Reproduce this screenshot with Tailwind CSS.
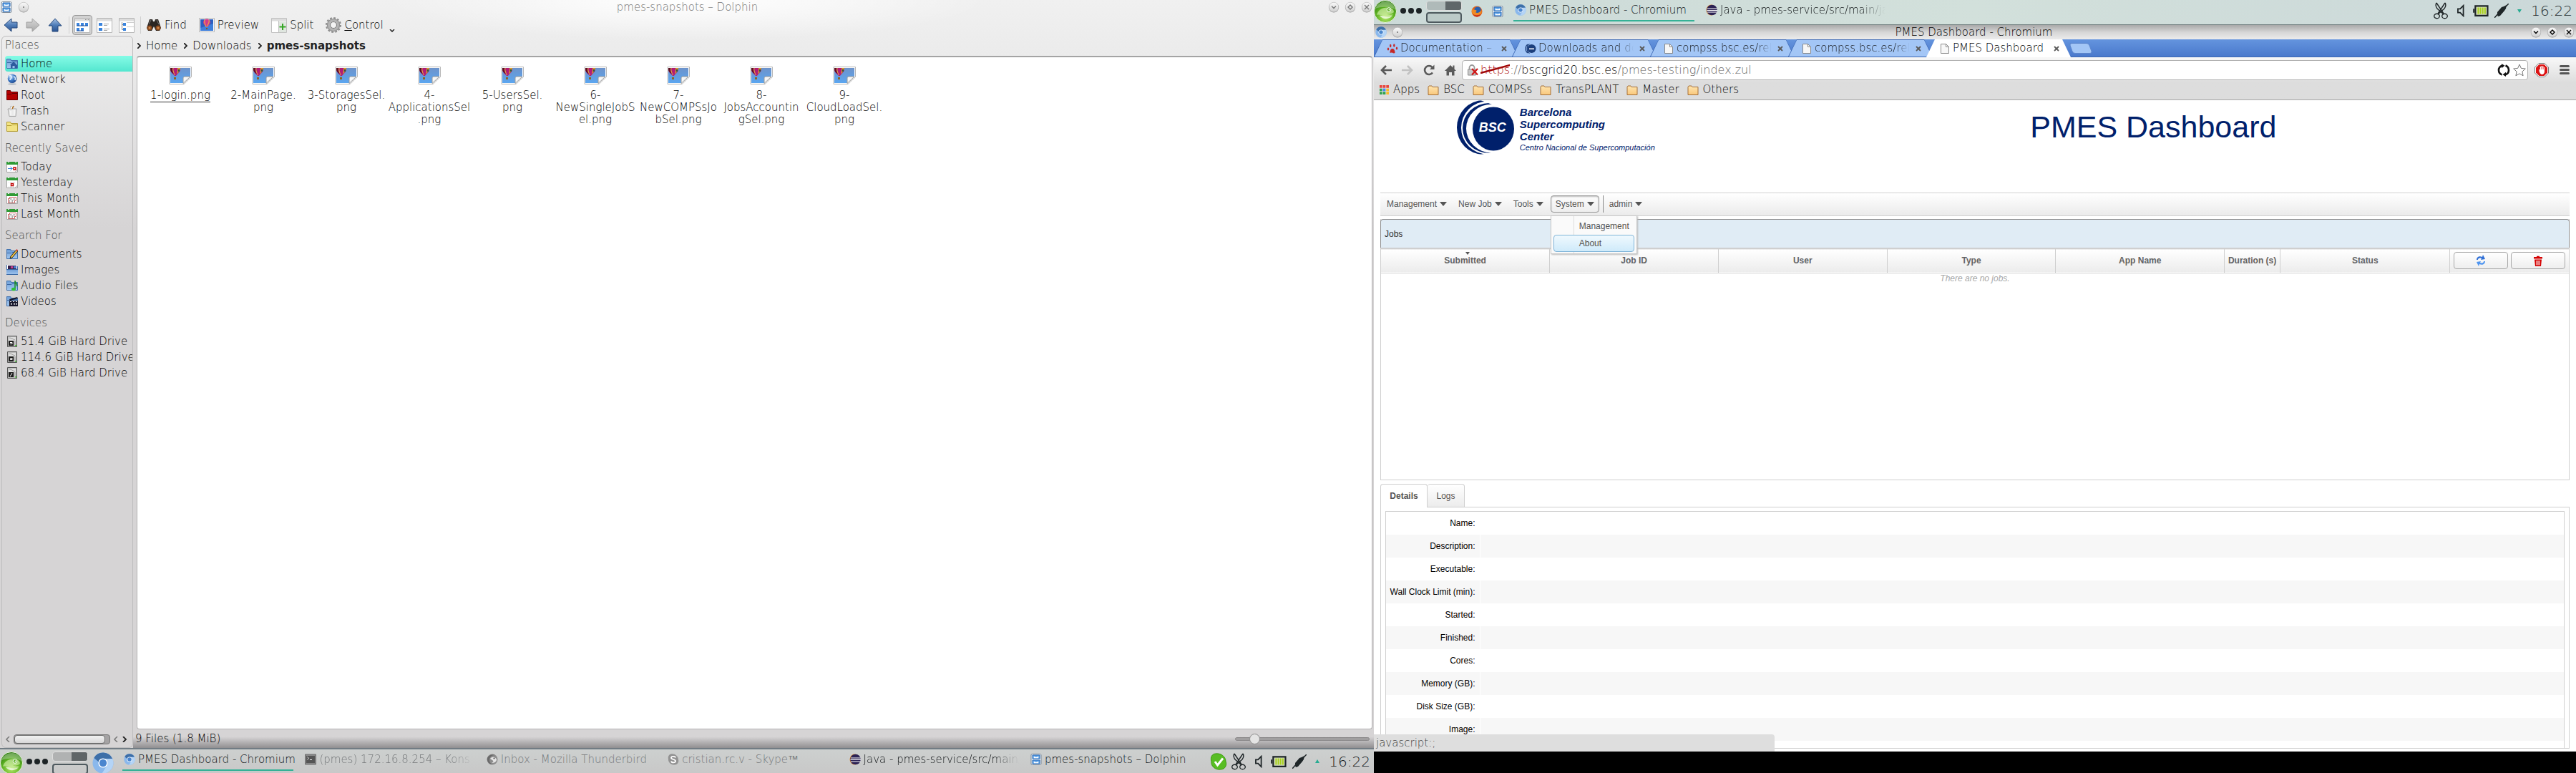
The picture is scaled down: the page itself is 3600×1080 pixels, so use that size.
<!DOCTYPE html>
<html lang="en">
<head>
<meta charset="utf-8">
<title>Desktop</title>
<script src="https://cdn.jsdelivr.net/npm/@tailwindcss/browser@4"></script>
</head>
<body class="h-screen overflow-hidden bg-black font-['DejaVu_Sans',sans-serif] font-extralight text-[15px] leading-[17px] text-black">

<svg class="absolute size-0" aria-hidden="true">
  <defs>
    <linearGradient id="gBlue" x1="0" y1="0" x2="0" y2="1"><stop offset="0" stop-color="#a9c4e6"/><stop offset=".5" stop-color="#4f7db8"/><stop offset="1" stop-color="#2b5492"/></linearGradient>
    <linearGradient id="gGray" x1="0" y1="0" x2="0" y2="1"><stop offset="0" stop-color="#d8d8d8"/><stop offset="1" stop-color="#a8a8a8"/></linearGradient>
    <linearGradient id="gSky" x1="0" y1="0" x2="0" y2="1"><stop offset="0" stop-color="#6d93cb"/><stop offset="1" stop-color="#5ba6f0"/></linearGradient>
    <linearGradient id="gFolder" x1="0" y1="0" x2="0" y2="1"><stop offset="0" stop-color="#6c9cd6"/><stop offset="1" stop-color="#a4c8f0"/></linearGradient>
    <linearGradient id="gBtn" x1="0" y1="0" x2="0" y2="1"><stop offset="0" stop-color="#fafafa"/><stop offset="1" stop-color="#cfcfcf"/></linearGradient>
    <linearGradient id="gOrange" x1="0" y1="0" x2="0" y2="1"><stop offset="0" stop-color="#ffe6b0"/><stop offset="1" stop-color="#f9c77c"/></linearGradient>
    <radialGradient id="gGreen" cx=".5" cy=".75" r=".7"><stop offset="0" stop-color="#b6e86a"/><stop offset=".6" stop-color="#5cb022"/><stop offset="1" stop-color="#2f7d12"/></radialGradient>
    <radialGradient id="gGlobe" cx=".35" cy=".3" r=".8"><stop offset="0" stop-color="#d4e8ff"/><stop offset=".5" stop-color="#3f7cc8"/><stop offset="1" stop-color="#173f86"/></radialGradient>
  </defs>

  <symbol id="arrow-back" viewBox="0 0 20 20"><path d="M1 10 11 1v5h8v8h-8v5z" fill="url(#gBlue)" stroke="#27497b"/></symbol>
  <symbol id="arrow-fwd" viewBox="0 0 20 20"><path d="M19 10 9 1v5H1v8h8v5z" fill="url(#gGray)" stroke="#a0a0a0"/></symbol>
  <symbol id="arrow-up" viewBox="0 0 20 20"><path d="M10 1 1 11h5v8h8v-8h5z" fill="url(#gBlue)" stroke="#27497b"/></symbol>

  <symbol id="view-icons" viewBox="0 0 22 22"><path d="M.5 1.500h21v20H.5z" fill="#fff" stroke="#b5b5b5"/><path d="M1 2h20v3.500H1z" fill="#dcdcdc"/><path d="M15 3h1v1h-1zM17 3h1v1h-1zM19 3h1v1h-1z" fill="#888"/><g fill="#3b84dd"><path d="M3 8h4v4H3zM9 8h4v4H9zM15 8h4v4h-4zM3 15h4v4H3zM9 15h4v4H9z"/></g><path d="M3 12h16M3 19h10" stroke="#1c4f9c"/></symbol>
  <symbol id="view-list" viewBox="0 0 22 22"><path d="M.5 1.500h21v20H.5z" fill="#fff" stroke="#b5b5b5"/><path d="M1 2h20v3.500H1z" fill="#dcdcdc"/><path d="M3 8h5v4H3zM3 15h5v4H3z" fill="#3b84dd"/><path d="M10 9.500h7M10 11.500h5M10 16.500h8M10 18.500h5" stroke="#a8a8a8"/></symbol>
  <symbol id="view-tree" viewBox="0 0 22 22"><path d="M.5 1.500h21v20H.5z" fill="#fff" stroke="#b5b5b5"/><path d="M1 2h20v3.500H1z" fill="#dcdcdc"/><path d="M4.500 7v10.500H7M4.500 10.500H7" stroke="#888" fill="none"/><path d="M6 8h4v4H6zM6 15h4v4H6z" fill="#3b84dd"/><path d="M11 7.500h10M11 13.500h10" stroke="#ccc"/></symbol>
  <symbol id="binoculars" viewBox="0 0 22 22"><path d="M5 3h4l1 3h2l1-3h4l4 12-2 4h-5l-3-6-3 6H3l-2-4z" fill="#2b2522"/><circle cx="5" cy="15" r="3.500" fill="#8b4a1e"/><circle cx="17" cy="15" r="3.500" fill="#8b4a1e"/><circle cx="5" cy="15" r="1.500" fill="#d08a4e"/><circle cx="17" cy="15" r="1.500" fill="#d08a4e"/><path d="M7 4 4 10M15 4l3 6" stroke="#777"/></symbol>
  <symbol id="preview" viewBox="0 0 22 20"><path d="M.5.5h21v19H.5z" fill="#fff" stroke="#b9b9b9"/><path d="M2 2h18v16H2z" fill="#3e7fdb"/><path d="M2 2h18v6L2 14z" fill="#2b5fc0"/><path d="M6 6a5 4.500 0 0 1 10 0c0 3-3 5-4 6.500h-2C9 11 6 9 6 6z" fill="#d13a8c"/><path d="M8 2.500C7 6 9 10 10 12.500M14 2.500c1 4-2 7-3 10" stroke="#f2c43a" fill="none"/><path d="M10 14h2v2h-2z" fill="#8a5a20"/></symbol>
  <symbol id="split" viewBox="0 0 22 22"><path d="M.5 1.500h21v20H.5z" fill="#fff" stroke="#c0c0c0"/><path d="M1 2h20v3.500H1z" fill="#dcdcdc"/><path d="M11 6h10v15H11z" fill="#dfe6df"/><path d="M10.500 5v16" stroke="#c0c0c0"/><path d="M16 9v9M11.500 13.500h9" stroke="#35a525" stroke-width="2"/></symbol>
  <symbol id="gear" viewBox="0 0 22 24"><circle cx="11" cy="12" r="9.500" fill="none" stroke="#8a8a8a" stroke-width="3" stroke-dasharray="2.600 2.370"/><circle cx="11" cy="12" r="7" fill="none" stroke="#b4b4b4" stroke-width="4.500"/><circle cx="11" cy="12" r="8.500" fill="none" stroke="#8d8d8d" stroke-width="1"/><circle cx="11" cy="12" r="4.500" fill="#f3f3f3" stroke="#777"/></symbol>

  <symbol id="f-blue" viewBox="0 0 16 16"><path d="M0 1h6l1 2h9v12H0z" fill="url(#gFolder)"/><path d="M.5 1.500h5l1 2h9v11H.5z" fill="none" stroke="#4272ae"/><path d="M1 6.500h6l1-1h7" stroke="#3a68a4" fill="none"/></symbol>
  <symbol id="f-home" viewBox="0 0 16 16"><use href="#f-blue"/><path d="m5 10 5-5 5 5v4.500h-3.500V11h-3v3.500H6V10z" fill="#2d5c9e"/></symbol>
  <symbol id="globe" viewBox="0 0 16 16"><ellipse cx="8" cy="14.500" rx="6" ry="1.500" fill="#b9c0c8"/><circle cx="8" cy="6.800" r="6.300" fill="url(#gGlobe)"/><path d="M4 3c2-1 3 0 3 2s-2 2-2 4M10 4c2 0 3 2 2 5" stroke="#e4f1ff" stroke-width="1.500" fill="none"/></symbol>
  <symbol id="f-red" viewBox="0 0 16 16"><path d="M.5 1.500h5l1 2h9v11H.5z" fill="#b30000" stroke="#6b0000"/><path d="M1 6.500h6l1-1h7" stroke="#5c0000" fill="none"/></symbol>
  <symbol id="f-yellow" viewBox="0 0 16 16"><path d="M.5 1.500h5l1 2h9v11H.5z" fill="#f2e384" stroke="#b39d33"/><path d="M1 6.500h6l1-1h7" stroke="#b39d33" fill="none"/></symbol>
  <symbol id="trash" viewBox="0 0 16 16"><path d="M2 5h12l-1 10.500H4z" fill="#e9e9e9" stroke="#a5a5a5"/><path d="m5 5 1-4 3 2-1 3z" fill="#fff" stroke="#bbb"/><path d="m8 5 2-4" stroke="#b06a1a" stroke-width="1.500"/><path d="M11 6v8M6 8v6" stroke="#fff"/></symbol>
  <symbol id="cal" viewBox="0 0 16 16"><path d="M.5 2.500h15v13H.5z" fill="#fff" stroke="#a6a6a6"/><path d="M0 1h16v4H0z" fill="#2f9a35"/><path d="M3 0v2M13 0v2" stroke="#ddd" stroke-width="2"/><path d="M12 15.500 15.500 12" stroke="#999"/></symbol>
  <symbol id="cal-today" viewBox="0 0 16 16"><use href="#cal"/><path d="M2 10.500h6M5.500 8l3 2.500-3 2.500" stroke="#3a7fd8" fill="none"/><path d="M10 9h3v3h-3z" fill="#fff" stroke="#c00000" stroke-width="1.500"/></symbol>
  <symbol id="cal-yday" viewBox="0 0 16 16"><use href="#cal"/><path d="M3 8h10M3 14h8" stroke="#ccc" stroke-dasharray="1 1"/><path d="M6.500 9.500h3v3h-3z" fill="#fff" stroke="#c00000" stroke-width="1.500"/></symbol>
  <symbol id="cal-month" viewBox="0 0 16 16"><use href="#cal"/><path d="M2.500 8.500h2v-2h9v5h-2v3h-9z" fill="#fff" stroke="#c86060"/><path d="M5 9h8M4 11h7M4 13h6" stroke="#555" stroke-dasharray="1 1"/></symbol>
  <symbol id="f-doc" viewBox="0 0 16 16"><use href="#f-blue"/><path d="m5 14 1-3 8-9 2 1.500-8 9.500z" fill="#f0c040" stroke="#222"/><path d="m13 3 1.500-2L16 2.500 15 4z" fill="#d84040"/></symbol>
  <symbol id="f-img" viewBox="0 0 16 16"><use href="#f-blue"/><path d="M1 1h14v6H1z" fill="#fff"/><path d="M2 2h12v5H2z" fill="#35204a"/><path d="M6 3h3v3H6z" fill="#c04090"/><path d="M10 3h4v3h-4z" fill="#4b7bd0"/><path d="M0 7h16v8H0z" fill="url(#gFolder)"/><path d="M0 7.500h16M0 14.500h16" stroke="#3a68a4"/></symbol>
  <symbol id="f-audio" viewBox="0 0 16 16"><use href="#f-blue"/><path d="M12 1v11M12 2c1 3 3 3 3 7" stroke="#1e8f2a" stroke-width="1.500" fill="none"/><ellipse cx="10" cy="13" rx="3" ry="2.300" fill="#2fbf3a"/></symbol>
  <symbol id="f-video" viewBox="0 0 16 16"><use href="#f-blue"/><path d="M4 7h12v8H4z" fill="#16162a"/><path d="m4 5 11-3 1 2L5 7z" fill="#16162a"/><path d="M5 8.500h10" stroke="#fff" stroke-dasharray="2 2"/><path d="M6 11h2v1.500H6zM10 11h2v1.500h-2zM13 11h2v1.500h-2z" fill="#fff"/></symbol>
  <symbol id="drive" viewBox="0 0 16 16"><path d="M1.500.5h13v15h-13z" fill="#b9b9b9" stroke="#555"/><path d="M3 2h10v5H3z" fill="#dedede"/><path d="M4 3c3 0 5 2 8 3" stroke="#999" fill="none"/><path d="M3 7h7v7H3z" fill="#1c1c1c"/><path d="M5 9.500h3v2H5" stroke="#fff" fill="none"/><path d="M12 13h2v1.500h-2z" fill="#4fd03a"/></symbol>
  <symbol id="drive-root" viewBox="0 0 16 16"><path d="M1.500.5h13v15h-13z" fill="#b9b9b9" stroke="#555"/><path d="M3 2h10v5H3z" fill="#dedede"/><path d="M4 3c3 0 5 2 8 3" stroke="#999" fill="none"/><path d="M3 7h7v7H3z" fill="#1c1c1c"/><path d="m5 13 3-5" stroke="#fff"/><path d="M12 13h2v1.500h-2z" fill="#4fd03a"/></symbol>

  <symbol id="png" viewBox="0 0 32 25"><path d="M1 .5h30.500v14L21 24.500H1z" fill="#fff" stroke="#b7b7b7"/><path d="M2 2h28v12l-10 9H2z" fill="url(#gSky)"/><path d="M2 2h14c1 5-4 8-6 11H8C6 10 2 8 2 4z" fill="#b01c77"/><path d="M2 2h3c-1 3 1 7 2 9C5 9 2 7 2 4z" fill="#5a1020"/><path d="M6 2c-1 3 1 7 2.500 10" stroke="#e8b93a" fill="none"/><path d="M12 2h4c0 4-3 6-5 9 0-3 2-6 1-9z" fill="#d89b30"/><path d="M13 4h2v3h-2z" fill="#2a5a3a"/><path d="M7 15h3v3H7z" fill="#8d6424"/><path d="M30 14 20 23.500V16c0-1 1-2 2-2z" fill="#f7f7f7" stroke="#9a9a9a"/></symbol>

  <symbol id="win-min" viewBox="0 0 16 16"><circle cx="8" cy="8.500" r="7" fill="#9a9a9a"/><circle cx="8" cy="8" r="6.800" fill="url(#gBtn)" stroke="#b0b0b0" stroke-width=".5"/><path d="m5 6.500 3 3 3-3" fill="none" stroke="currentColor" stroke-width="1.400"/></symbol>
  <symbol id="win-max" viewBox="0 0 16 16"><circle cx="8" cy="8.500" r="7" fill="#9a9a9a"/><circle cx="8" cy="8" r="6.800" fill="url(#gBtn)" stroke="#b0b0b0" stroke-width=".5"/><path d="m8 5 3 3-3 3-3-3z" fill="none" stroke="currentColor" stroke-width="1.400"/></symbol>
  <symbol id="win-close" viewBox="0 0 16 16"><circle cx="8" cy="8.500" r="7" fill="#9a9a9a"/><circle cx="8" cy="8" r="6.800" fill="url(#gBtn)" stroke="#b0b0b0" stroke-width=".5"/><path d="m5 5 6 6m0-6-6 6" fill="none" stroke="currentColor" stroke-width="1.400"/></symbol>
  <symbol id="win-dot" viewBox="0 0 16 16"><circle cx="8" cy="8.500" r="7" fill="#9a9a9a"/><circle cx="8" cy="8" r="6.800" fill="url(#gBtn)" stroke="#b0b0b0" stroke-width=".5"/><circle cx="8" cy="8" r=".9" fill="#666"/></symbol>

  <symbol id="cabinet" viewBox="0 0 16 16"><rect x="1" y=".5" width="14" height="15" rx="1.500" fill="#e8eef5" stroke="#7d8b9b"/><path d="M3 2h10v5H3zM3 9h10v5H3z" fill="#5fa4ea" stroke="#2f6cb5"/><path d="M5.500 4v1.500h5V4M5.500 11v1.500h5V11" stroke="#fff" stroke-width="1.500" fill="none"/></symbol>
  <symbol id="geeko" viewBox="0 0 32 32"><circle cx="16" cy="16" r="15.500" fill="url(#gGreen)" stroke="#e6f3d8"/><path d="M2 12C5 5 11 2 17 2c7 0 12 5 13 11-9-4-19-4-28-1z" fill="#fff" opacity=".3"/><path d="M4 21c2-8 10-12 19-10 3 1 5 3 5 6-2 2-6 3-10 2 3 2 6 2 9 1-3 4-9 5-13 3-3-2-7-3-10-2z" fill="#d9f2b4" opacity=".6"/><path d="M8 22c5-1 8 4 18 0-4 5-13 6-18 0z" fill="#fff" opacity=".7"/><circle cx="21" cy="13.500" r="2.800" fill="#5cb022" stroke="#fff"/><circle cx="21.500" cy="13.500" r="1" fill="#fff"/></symbol>
  <symbol id="dots" viewBox="0 0 32 10"><circle cx="5" cy="5" r="4" fill="#1d2426"/><circle cx="16" cy="5" r="4" fill="#1d2426"/><circle cx="27" cy="5" r="4" fill="#1d2426"/></symbol>
  <symbol id="chromium" viewBox="0 0 32 32"><circle cx="16" cy="16" r="15.500" fill="#8ab8ec"/><path d="M2.500 8.500A15.500 15.500 0 0 1 30 9.500H16a7 7 0 0 0-6.500 5z" fill="#3d6fa8"/><path d="M30 9.500A15.500 15.500 0 0 1 14.500 31.400L22 19.500a7 7 0 0 0-3-9.500z" fill="#b4d4f6"/><circle cx="16" cy="16" r="7" fill="#fff"/><circle cx="16" cy="16" r="5.500" fill="#4a86cf"/></symbol>
  <symbol id="konsole" viewBox="0 0 16 16"><path d="M.5 1h15v14H.5z" fill="#8a8a8a" stroke="#6e6e6e"/><path d="M2 3h12v10H2z" fill="#555"/><path d="m3.500 4.500 2 2-2 2M7 8.500h3" stroke="#eee" fill="none"/></symbol>
  <symbol id="tbird" viewBox="0 0 16 16"><circle cx="8" cy="8" r="7.500" fill="#8d8d8d"/><path d="M5 7c3-4 8-2 9 1 0 4-4 5-7 5 3-1 3-3 1-4z" fill="#e5e5e5"/><path d="M1 6c2-4 7-6 11-4-5 0-8 3-8 7 0 3 2 5 4 6-5 0-8-5-7-9z" fill="#6a6a6a"/><circle cx="10.500" cy="6.500" r="1" fill="#444"/></symbol>
  <symbol id="skype-gray" viewBox="0 0 16 16"><path d="M5 .5C9-.5 15 3 15 8.500c1 3-1 7-5 7C5 16 .5 12 1 7.500c-1-3 1-7 4-7z" fill="#929292"/><path d="M11 5.500C10.500 3.500 5 3 5 5.800s6 1.600 6 4.400S5.500 13 5 10.500" stroke="#fff" stroke-width="1.800" fill="none"/></symbol>
  <symbol id="skype-on" viewBox="0 0 24 24"><path d="M8 1c7-1 14 4 14 11 2 5-1 11-7 11C8 24 1 19 2 12 0 6 3 1 8 1z" fill="#58bd24" stroke="#3c9a10"/><path d="m7 12 3.500 5L18 7.500" stroke="#fff" stroke-width="3" fill="none"/></symbol>
  <symbol id="eclipse" viewBox="0 0 16 16"><ellipse cx="7.500" cy="8" rx="7" ry="7.500" fill="#e48a2a"/><circle cx="8.500" cy="8" r="7.300" fill="#2c2255"/><path d="M2 6h13.500M1.500 8.500H16M2 11h13.500" stroke="#fff" stroke-width="1.200"/></symbol>
  <symbol id="firefox" viewBox="0 0 16 16"><circle cx="8" cy="8" r="7.500" fill="#e0631c"/><circle cx="9" cy="6.500" r="5" fill="#2a5fae"/><path d="M1 4c1 2 3 1 5 2 2 0 2 2 0 3 2 2 6 1 8-3 2 5-2 9.500-6 9.500S0 12 1 4z" fill="#f08a24"/><path d="M2 11c3 3 8 3 12 0-1 3-4 4.500-6 4.500S3 14 2 11z" fill="#c9301c"/></symbol>

  <symbol id="scissors" viewBox="0 0 22 24"><g fill="none" stroke="#1f2628" stroke-width="1.400"><path d="M5 1C3 4 4 6 6 9l9 8M17 1c2 3 1 5-1 8l-9 8M5 1l10 15M17 1 7 16"/><ellipse cx="5.500" cy="19.500" rx="3.800" ry="3.300"/><ellipse cx="16.500" cy="19.500" rx="3.800" ry="3.300"/></g></symbol>
  <symbol id="speaker" viewBox="0 0 12 20"><path d="M1.500 7v6H5l5 5V2L5 7z" fill="none" stroke="#1f2628" stroke-width="2"/></symbol>
  <symbol id="battery" viewBox="0 0 24 20"><path d="M3.500 2.500h19v15h-19z" fill="#d7dfc0" stroke="#1f2628" stroke-width="2.500"/><path d="M0 7h2v6H0z" fill="#1f2628"/><path d="M8 5v10M11.500 5v10M15 5v10M18.500 5v10" stroke="#a6cf1a" stroke-width="2.200"/></symbol>
  <symbol id="plug" viewBox="0 0 20 20"><path d="m0 20 6-7M14 6l6-6" stroke="#1f2628" stroke-width="1.500"/><path d="m4 12 6-7 3-1 4-2-1 5-2 3-6 7-3 1-1-2z" fill="#1f2628"/></symbol>

  <symbol id="paw" viewBox="0 0 16 16"><g fill="#c62828"><path d="M8 8c2.500 0 3 2.500 3.500 4.500S10 15 8 13.800s-4 1.200-3.500-1.300S5.500 8 8 8z"/><ellipse cx="2" cy="8.500" rx="1.200" ry="2"/><ellipse cx="5.200" cy="4" rx="1.200" ry="2.200"/><ellipse cx="10.300" cy="3.500" rx="1.200" ry="2.200"/><ellipse cx="14" cy="7.500" rx="1.200" ry="2"/></g></symbol>
  <symbol id="bsc" viewBox="0 0 16 16"><circle cx="9.500" cy="8" r="6" fill="#1c3f7c"/><path d="M6.500 1.500C2 4 2 12 6.500 14.500M4 2c-4 3-4 9 0 12" stroke="#1c3f7c" fill="none" stroke-width="1.200"/><path d="M6 7.500h7v1.500H6z" fill="#fff"/></symbol>
  <symbol id="page" viewBox="0 0 12 14"><path d="M.5.500h7l4 4v9H.5z" fill="#f7f7f7" stroke="#8a8a8a"/><path d="M7.500.500v4h4" fill="none" stroke="#8a8a8a"/></symbol>
  <symbol id="x" viewBox="0 0 8 8"><path d="m1 1 6 6m0-6L1 7" stroke="#5a5a5a" stroke-width="1.800"/></symbol>
  <symbol id="nav-back" viewBox="0 0 16 14"><path d="M8 1 2 7l6 6M2 7h14" stroke="currentColor" stroke-width="2.600" fill="none"/></symbol>
  <symbol id="nav-fwd" viewBox="0 0 16 14"><path d="m8 1 6 6-6 6M14 7H0" stroke="currentColor" stroke-width="2.600" fill="none"/></symbol>
  <symbol id="reload" viewBox="0 0 16 16"><path d="M13 11.500A6 6 0 1 1 12.500 4" stroke="#5a5a5a" stroke-width="2.600" fill="none"/><path d="M15.500.500v6.500H9z" fill="#5a5a5a"/></symbol>
  <symbol id="home" viewBox="0 0 16 16"><path d="M8 1 0 9h2.500v6.500H6V11h4v4.500h3.500V9H16l-2.500-2.600V1.500h-2v3z" fill="#5a5a5a"/></symbol>
  <symbol id="lock-bad" viewBox="0 0 16 16"><path d="M3.500 7V4.500a3.500 3.500 0 0 1 7 0V7" stroke="#999" stroke-width="1.800" fill="none"/><path d="M1.500 7h11v8h-11z" fill="#c9c9c9" stroke="#8a8a8a"/><path d="m7 6 8 8.500m0-8.500-8 8.500" stroke="#d01818" stroke-width="2.200"/></symbol>
  <symbol id="folder" viewBox="0 0 16 14"><path d="M1 2.500 2 1h4l1 1.500h8v11H1z" fill="url(#gOrange)" stroke="#a5703a"/></symbol>
  <symbol id="apps" viewBox="0 0 14 14"><path d="M0 0h4v4H0zM5 0h4v4H5zM10 0h4v4h-4z" fill="#e8453c"/><path d="M0 5h4v4H0zM0 10h4v4H0zM5 10h4v4H5z" fill="#31a350"/><path d="M5 5h4v4H5z" fill="#4688f1"/><path d="M10 5h4v4h-4zM10 10h4v4h-4z" fill="#f9bb2d"/></symbol>
  <symbol id="sync" viewBox="0 0 18 18"><path d="M6.500 15.500C.5 13 .5 5 6.500 2.700M11.500 2.500c6 2.500 6 10.500 0 12.800" stroke="#111" stroke-width="2.600" fill="none"/><path d="m6 0 4.500 2.800L6 6.200zM12 11.800V18l-4.500-2.800z" fill="#111"/></symbol>
  <symbol id="star" viewBox="0 0 18 18"><path d="m9 1 2.400 5.400 5.900.6-4.400 4 1.200 5.800L9 13.900l-5.100 2.900L5.100 11 .7 7l5.900-.6z" fill="#fff" stroke="#777"/></symbol>
  <symbol id="adblock" viewBox="0 0 20 20"><path d="M6 .5h8L19.500 6v8L14 19.500H6L.5 14V6z" fill="#fff" stroke="#777"/><path d="M6.500 2h7L18 6.500v7L13.500 18h-7L2 13.500v-7z" fill="#dc1414"/><path d="M6 9h1.200l.6 2V5H9v4h.5V4h1.300v5h.5V4.500h1.200V9h.5V6H14v6c0 2-1.500 4-3.500 4S7 14 6 9z" fill="#fff"/></symbol>
  <symbol id="caret" viewBox="0 0 10 6"><path d="M0 0h10L5 6z" fill="#555"/></symbol>
  <symbol id="refresh" viewBox="0 0 14 16"><path d="M1 7c0-4 4-6 8-4l1-3 3 6-6 1 1-2C5 4 3 5 3 7z" fill="#2f6fd6"/><path d="M13 9c0 4-4 6-8 4l-1 3-3-6 6-1-1 2c3 1 5 0 5-2z" fill="#4f95f0"/></symbol>
  <symbol id="bin" viewBox="0 0 12 15"><path d="M4 2V.8h4V2h4v2.500H0V2zM1 5.500h10L10 15H2z" fill="#d40000"/><path d="M4 7v6.500M6 7v6.500M8 7v6.500" stroke="#fff"/></symbol>
  <symbol id="bsc-logo" viewBox="0 0 80 76"><ellipse cx="37" cy="38" rx="37" ry="38" fill="#00206b"/><ellipse cx="43" cy="38.500" rx="37" ry="37" fill="#fff"/><ellipse cx="45" cy="39" rx="37" ry="35" fill="#00206b"/><ellipse cx="49" cy="39.500" rx="36" ry="34" fill="#fff"/><ellipse cx="51" cy="40" rx="29" ry="30.500" fill="#00206b"/><path d="M33 0h47v9L60 10zM33 76h47V64L58 71z" fill="#fff"/></symbol>
</svg>

<div class="grid h-full grid-cols-[8fr_7fr]">

  <!-- Left monitor: file manager and panel -->
  <div class="flex h-full min-w-0 flex-col overflow-hidden bg-[#d6d4d5]">
    <section class="flex min-h-0 flex-1 flex-col bg-[radial-gradient(ellipse_420px_56px_at_50%_0,#ffffff,transparent),linear-gradient(to_bottom,#f0f0f0,#ebebeb_80px,#d6d4d5_320px)]">
      <header class="flex h-5 shrink-0 items-center pr-[2px] pl-[1px] text-[#777]">
        <svg class="size-[16px]"><use href="#cabinet"/></svg>
        <svg class="ml-2 size-[16px]"><use href="#win-dot"/></svg>
        <h1 class="flex-1 pl-[24px] text-center">pmes-snapshots – Dolphin</h1>
        <div class="flex gap-[7px]">
          <button aria-label="Minimize"><svg class="size-4"><use href="#win-min"/></svg></button>
          <button aria-label="Maximize"><svg class="size-4"><use href="#win-max"/></svg></button>
          <button aria-label="Close"><svg class="size-4"><use href="#win-close"/></svg></button>
        </div>
      </header>
      <nav class="flex h-[30px] shrink-0 items-center pl-[5px]">
        <div class="flex gap-[11px]">
          <button aria-label="Back"><svg class="size-5"><use href="#arrow-back"/></svg></button>
          <button aria-label="Forward"><svg class="size-5"><use href="#arrow-fwd"/></svg></button>
          <button aria-label="Up"><svg class="size-5"><use href="#arrow-up"/></svg></button>
        </div>
        <i class="mr-1 ml-[9px] h-6 w-px bg-[#cfcfcf]"></i>
        <div class="flex gap-[3px]">
          <button aria-label="Icons" class="flex h-7 w-7 items-center justify-center rounded border border-[#999] bg-[#d2d2d2]"><svg class="size-[22px]"><use href="#view-icons"/></svg></button>
          <button aria-label="Details" class="flex h-7 w-7 items-center justify-center"><svg class="size-[22px]"><use href="#view-list"/></svg></button>
          <button aria-label="Columns" class="flex h-7 w-7 items-center justify-center"><svg class="size-[22px]"><use href="#view-tree"/></svg></button>
        </div>
        <i class="mr-[7px] ml-[5px] h-6 w-px bg-[#cfcfcf]"></i>
        <div class="flex items-center gap-[17px]">
          <button class="flex items-center gap-1"><svg class="size-[22px]"><use href="#binoculars"/></svg>Find</button>
          <button class="flex items-center gap-1"><svg class="h-5 w-[22px]"><use href="#preview"/></svg>Preview</button>
          <button class="flex items-center gap-1"><svg class="size-[22px]"><use href="#split"/></svg>Split</button>
          <button class="flex items-center gap-1"><svg class="h-6 w-[22px]"><use href="#gear"/></svg><span><u class="underline-offset-2">C</u>ontrol</span><svg class="mt-4 ml-1 h-1 w-2" viewBox="0 0 8 4"><path d="m1 0 3 3 3-3" fill="none" stroke="#222" stroke-width="1.500"/></svg></button>
        </div>
      </nav>

      <div class="flex min-h-0 flex-1">
        <aside class="ml-[2px] flex w-[184px] shrink-0 flex-col overflow-hidden rounded-md border border-[#bdbcbd] whitespace-nowrap">
          <div class="min-h-0 flex-1 overflow-hidden pl-1">
            <h2 class="mb-0.5 flex h-[25px] items-center text-[#4c4c4c]">Places</h2>
            <ul>
              <li class="flex h-[22px] items-center gap-1 rounded-l bg-linear-to-b from-[#84fbe6] to-[#52e6cf] px-0.5"><svg class="size-4"><use href="#f-home"/></svg>Home</li>
              <li class="flex h-[22px] items-center gap-1 px-0.5"><svg class="size-4"><use href="#globe"/></svg>Network</li>
              <li class="flex h-[22px] items-center gap-1 px-0.5"><svg class="size-4"><use href="#f-red"/></svg>Root</li>
              <li class="flex h-[22px] items-center gap-1 px-0.5"><svg class="size-4"><use href="#trash"/></svg>Trash</li>
              <li class="flex h-[22px] items-center gap-1 px-0.5"><svg class="size-4"><use href="#f-yellow"/></svg>Scanner</li>
            </ul>
            <h2 class="flex h-[34px] items-center pt-1 text-[#4c4c4c]">Recently Saved</h2>
            <ul>
              <li class="flex h-[22px] items-center gap-1 px-0.5"><svg class="size-4"><use href="#cal-today"/></svg>Today</li>
              <li class="flex h-[22px] items-center gap-1 px-0.5"><svg class="size-4"><use href="#cal-yday"/></svg>Yesterday</li>
              <li class="flex h-[22px] items-center gap-1 px-0.5"><svg class="size-4"><use href="#cal-month"/></svg>This Month</li>
              <li class="flex h-[22px] items-center gap-1 px-0.5"><svg class="size-4"><use href="#cal-month"/></svg>Last Month</li>
            </ul>
            <h2 class="flex h-[34px] items-center pt-1 text-[#4c4c4c]">Search For</h2>
            <ul>
              <li class="flex h-[22px] items-center gap-1 px-0.5"><svg class="size-4"><use href="#f-doc"/></svg>Documents</li>
              <li class="flex h-[22px] items-center gap-1 px-0.5"><svg class="size-4"><use href="#f-img"/></svg>Images</li>
              <li class="flex h-[22px] items-center gap-1 px-0.5"><svg class="size-4"><use href="#f-audio"/></svg>Audio Files</li>
              <li class="flex h-[22px] items-center gap-1 px-0.5"><svg class="size-4"><use href="#f-video"/></svg>Videos</li>
            </ul>
            <h2 class="flex h-[34px] items-center pt-1 text-[#4c4c4c]">Devices</h2>
            <ul>
              <li class="flex h-[22px] items-center gap-1 px-0.5"><svg class="size-4 shrink-0"><use href="#drive"/></svg>51.4 GiB Hard Drive</li>
              <li class="flex h-[22px] items-center gap-1 px-0.5"><svg class="size-4 shrink-0"><use href="#drive"/></svg>114.6 GiB Hard Drive</li>
              <li class="flex h-[22px] items-center gap-1 px-0.5"><svg class="size-4 shrink-0"><use href="#drive-root"/></svg>68.4 GiB Hard Drive</li>
            </ul>
          </div>
          <div class="flex h-[22px] items-center gap-1 pl-1">
            <svg class="h-2 w-2" viewBox="0 0 8 8"><path d="M6 0 2 4l4 4" fill="none" stroke="#777" stroke-width="1.500"/></svg>
            <div class="h-[14px] w-[135px] rounded border border-[#777] bg-[#a5a3a4]"><div class="h-full w-[127px] rounded border border-[#6e6e6e] bg-linear-to-b from-[#f2f2f2] to-[#d8d7d8]"></div></div>
            <svg class="h-2 w-2" viewBox="0 0 8 8"><path d="M6 0 2 4l4 4" fill="none" stroke="#777" stroke-width="1.500"/></svg>
            <svg class="h-2 w-2" viewBox="0 0 8 8"><path d="m2 0 4 4-4 4" fill="none" stroke="#222" stroke-width="1.800"/></svg>
          </div>
        </aside>

        <div class="flex min-w-0 flex-1 flex-col">
          <nav class="flex h-7 shrink-0 items-center gap-[7px] pl-[6px]">
            <svg class="h-2 w-[5px]" viewBox="0 0 5 8"><path d="m0 0 4 4-4 4" fill="none" stroke="#222" stroke-width="1.800"/></svg>
            <a href="#home">Home</a>
            <svg class="ml-[2px] h-2 w-[5px]" viewBox="0 0 5 8"><path d="m0 0 4 4-4 4" fill="none" stroke="#222" stroke-width="1.800"/></svg>
            <a href="#downloads">Downloads</a>
            <svg class="ml-[2px] h-2 w-[5px]" viewBox="0 0 5 8"><path d="m0 0 4 4-4 4" fill="none" stroke="#222" stroke-width="1.800"/></svg>
            <a href="#snapshots" class="font-bold text-[#222]">pmes-snapshots</a>
          </nav>
          <div class="mr-[2px] ml-[5px] min-h-0 flex-1 rounded border border-t-2 border-[#b4b3b4] border-t-[#a4a4a4] bg-white">
            <ul class="grid grid-cols-[repeat(auto-fill,116px)] pt-[13px] pl-[2px] text-center">
              <li class="flex flex-col items-center gap-[7px]"><svg class="h-[25px] w-8"><use href="#png"/></svg><span class="border-b border-[#333]">1-login.png</span></li>
              <li class="flex flex-col items-center gap-[7px]"><svg class="h-[25px] w-8"><use href="#png"/></svg><span>2-MainPage.<br>png</span></li>
              <li class="flex flex-col items-center gap-[7px]"><svg class="h-[25px] w-8"><use href="#png"/></svg><span>3-StoragesSel.<br>png</span></li>
              <li class="flex flex-col items-center gap-[7px]"><svg class="h-[25px] w-8"><use href="#png"/></svg><span>4-<br>ApplicationsSel<br>.png</span></li>
              <li class="flex flex-col items-center gap-[7px]"><svg class="h-[25px] w-8"><use href="#png"/></svg><span>5-UsersSel.<br>png</span></li>
              <li class="flex flex-col items-center gap-[7px]"><svg class="h-[25px] w-8"><use href="#png"/></svg><span>6-<br>NewSingleJobS<br>el.png</span></li>
              <li class="flex flex-col items-center gap-[7px]"><svg class="h-[25px] w-8"><use href="#png"/></svg><span>7-<br>NewCOMPSsJo<br>bSel.png</span></li>
              <li class="flex flex-col items-center gap-[7px]"><svg class="h-[25px] w-8"><use href="#png"/></svg><span>8-<br>JobsAccountin<br>gSel.png</span></li>
              <li class="flex flex-col items-center gap-[7px]"><svg class="h-[25px] w-8"><use href="#png"/></svg><span>9-<br>CloudLoadSel.<br>png</span></li>
            </ul>
          </div>
          <footer class="flex h-[26px] shrink-0 items-center justify-between bg-linear-to-b from-[#d6d4d5] from-40% to-[#918f91] pr-[6px] pl-[3px]">
            <span>9 Files (1.8 MiB)</span>
            <input type="range" aria-label="Icon size" min="0" max="100" value="11" class="h-[5px] w-[188px] appearance-none rounded-full border border-[#8a8889] bg-[#a19fa0] [&::-webkit-slider-thumb]:size-[15px] [&::-webkit-slider-thumb]:appearance-none [&::-webkit-slider-thumb]:rounded-full [&::-webkit-slider-thumb]:border [&::-webkit-slider-thumb]:border-[#8a8a8a] [&::-webkit-slider-thumb]:bg-[#e4e4e4]">
          </footer>
        </div>
      </div>
    </section>

    <footer class="flex h-[35px] shrink-0 items-center border-t-2 border-[#717c84] bg-linear-to-b from-[#cdd0cf] to-[#c8c8c8]">
      <svg class="mt-1 size-8"><use href="#geeko"/></svg>
      <svg class="ml-[4px] h-[10px] w-8"><use href="#dots"/></svg>
      <div class="mt-1 ml-[5px] flex w-[50px] flex-col gap-[3px]">
        <div class="flex h-[14px] overflow-hidden rounded-sm border border-[#dedede] bg-[#b0b2b2]"><i class="ml-auto w-[22px] bg-[#5f6567]"></i></div>
        <div class="h-[15px] rounded border-2 border-[#4d595e]"></div>
      </div>
      <svg class="mt-1 ml-[6px] size-[30px]"><use href="#chromium"/></svg>
      <div class="ml-3 grid h-full min-w-0 flex-1 grid-cols-6 gap-[14px] whitespace-nowrap text-[#101416]">
        <button class="mb-[3px] flex min-w-0 items-center gap-1 border-b-2 border-[#34b196] px-0.5"><svg class="size-4 shrink-0"><use href="#chromium"/></svg>PMES Dashboard - Chromium</button>
        <button class="mb-[3px] flex min-w-0 items-center gap-1 overflow-hidden border-b-2 border-transparent px-0.5 text-[#75787a] [mask-image:linear-gradient(to_right,black_85%,transparent)]"><svg class="size-4 shrink-0"><use href="#konsole"/></svg>(pmes) 172.16.8.254 – Kons</button>
        <button class="mb-[3px] flex min-w-0 items-center gap-1 border-b-2 border-transparent px-0.5 text-[#75787a]"><svg class="size-4 shrink-0"><use href="#tbird"/></svg>Inbox - Mozilla Thunderbird</button>
        <button class="mb-[3px] flex min-w-0 items-center gap-1 border-b-2 border-transparent px-0.5 text-[#75787a]"><svg class="size-4 shrink-0"><use href="#skype-gray"/></svg>cristian.rc.v - Skype™</button>
        <button class="mb-[3px] flex min-w-0 items-center gap-1 overflow-hidden border-b-2 border-transparent px-0.5 [mask-image:linear-gradient(to_right,black_85%,transparent)]"><svg class="size-4 shrink-0"><use href="#eclipse"/></svg>Java - pmes-service/src/main/j</button>
        <button class="mb-[3px] flex min-w-0 items-center gap-1 border-b-2 border-transparent px-0.5"><svg class="size-4 shrink-0"><use href="#cabinet"/></svg>pmes-snapshots – Dolphin</button>
      </div>
      <div class="ml-[14px] flex items-center pr-[5px]">
        <svg class="size-6"><use href="#skype-on"/></svg>
        <svg class="ml-[5px] h-6 w-[22px]"><use href="#scissors"/></svg>
        <svg class="ml-[11px] h-[18px] w-3"><use href="#speaker"/></svg>
        <svg class="ml-[10px] h-[18px] w-6"><use href="#battery"/></svg>
        <svg class="ml-[7px] size-5"><use href="#plug"/></svg>
        <svg class="ml-3 h-[5px] w-[6px]" viewBox="0 0 6 5"><path d="M0 5h6L3 0z" fill="#26ab92"/></svg>
        <time class="ml-[13px] text-[20px] leading-6 text-[#14181a]">16:22</time>
      </div>
    </footer>
  </div>

  <!-- Right monitor: panel and browser -->
  <div class="flex h-full min-w-0 flex-col overflow-hidden bg-black pb-[30px]">
    <header class="flex h-[35px] shrink-0 items-center border-b border-[#6d7b7b] bg-linear-to-r from-[#ccdad8] via-[#d2e0db] to-[#cbd8d9] whitespace-nowrap text-[#101416]">
      <svg class="mb-[2px] size-8"><use href="#geeko"/></svg>
      <svg class="mb-1 ml-[4px] h-[10px] w-8"><use href="#dots"/></svg>
      <div class="mb-[2px] ml-[5px] flex w-[50px] flex-col gap-[2px]">
        <div class="flex h-[14px] overflow-hidden rounded-sm border border-[#dedede] bg-[#afbab9]"><i class="ml-auto w-[22px] bg-[#5f6769]"></i></div>
        <div class="h-[15px] rounded border-2 border-[#4d595e] bg-[#bccac8]"></div>
      </div>
      <svg class="mb-[2px] ml-[13px] size-4"><use href="#firefox"/></svg>
      <svg class="mb-[2px] ml-[13px] size-4"><use href="#cabinet"/></svg>
      <div class="ml-[14px] flex h-full flex-1 gap-[14px]">
        <button class="mb-1 flex w-[253px] items-center gap-1 border-b-2 border-[#34b196] px-0.5"><svg class="size-4"><use href="#chromium"/></svg>PMES Dashboard - Chromium</button>
        <button class="mb-1 flex w-[253px] items-center gap-1 overflow-hidden border-b-2 border-transparent px-0.5 [mask-image:linear-gradient(to_right,black_85%,transparent)]"><svg class="size-4 shrink-0"><use href="#eclipse"/></svg>Java - pmes-service/src/main/ja</button>
      </div>
      <div class="mb-1 flex items-center pr-[5px]">
        <svg class="h-6 w-[22px]"><use href="#scissors"/></svg>
        <svg class="ml-[11px] h-[18px] w-3"><use href="#speaker"/></svg>
        <svg class="ml-[10px] h-[18px] w-6"><use href="#battery"/></svg>
        <svg class="ml-[7px] size-5"><use href="#plug"/></svg>
        <svg class="ml-3 h-[5px] w-[6px]" viewBox="0 0 6 5"><path d="M0 0h6L3 5z" fill="#26ab92"/></svg>
        <time class="ml-[13px] text-[20px] leading-6 text-[#262e30]">16:22</time>
      </div>
    </header>

    <section class="relative flex min-h-0 flex-1 flex-col overflow-hidden bg-white">
      <div class="flex h-5 shrink-0 items-center bg-linear-to-b from-[#a9a9a9] via-[#d6d6d6] to-[#ececec] px-[2px]">
        <svg class="size-4"><use href="#chromium"/></svg>
        <svg class="ml-[7px] size-4"><use href="#win-dot"/></svg>
        <h1 class="flex-1 pl-[20px] text-center">PMES Dashboard - Chromium</h1>
        <div class="flex gap-[7px]">
          <button aria-label="Minimize"><svg class="size-4"><use href="#win-min"/></svg></button>
          <button aria-label="Maximize"><svg class="size-4"><use href="#win-max"/></svg></button>
          <button aria-label="Close"><svg class="size-4"><use href="#win-close"/></svg></button>
        </div>
      </div>

      <!-- Tab strip -->
      <div class="flex h-[25px] shrink-0 items-end border-b border-[#3d68b4] bg-linear-to-b from-[#6494de] to-[#4a79cc] whitespace-nowrap text-[#1c1f24]">
        <div class="h-6 w-[202px] bg-[#3d68b4] pt-px [clip-path:polygon(0_100%,12px_0,190px_0,100%_100%)]">
          <div class="flex h-full items-center bg-[#a3c6f6] pr-3 pl-[18px] [clip-path:polygon(1px_100%,12px_0,190px_0,201px_100%)]"><svg class="size-4 shrink-0"><use href="#paw"/></svg><span class="ml-[3px] flex-1 overflow-hidden [mask-image:linear-gradient(to_right,black_85%,transparent)]">Documentation – C</span><button aria-label="Close tab" class="mr-1 ml-2"><svg class="size-2"><use href="#x"/></svg></button></div>
        </div>
        <div class="-ml-[9px] h-6 w-[202px] bg-[#3d68b4] pt-px [clip-path:polygon(0_100%,12px_0,190px_0,100%_100%)]">
          <div class="flex h-full items-center bg-[#a3c6f6] pr-3 pl-[18px] [clip-path:polygon(1px_100%,12px_0,190px_0,201px_100%)]"><svg class="size-4 shrink-0"><use href="#bsc"/></svg><span class="ml-[3px] flex-1 overflow-hidden [mask-image:linear-gradient(to_right,black_85%,transparent)]">Downloads and do</span><button aria-label="Close tab" class="mr-1 ml-2"><svg class="size-2"><use href="#x"/></svg></button></div>
        </div>
        <div class="-ml-[9px] h-6 w-[202px] bg-[#3d68b4] pt-px [clip-path:polygon(0_100%,12px_0,190px_0,100%_100%)]">
          <div class="flex h-full items-center bg-[#a3c6f6] pr-3 pl-[18px] [clip-path:polygon(1px_100%,12px_0,190px_0,201px_100%)]"><svg class="h-[14px] w-4 shrink-0"><use href="#page"/></svg><span class="ml-[3px] flex-1 overflow-hidden [mask-image:linear-gradient(to_right,black_85%,transparent)]">compss.bsc.es/rele</span><button aria-label="Close tab" class="mr-1 ml-2"><svg class="size-2"><use href="#x"/></svg></button></div>
        </div>
        <div class="-ml-[9px] h-6 w-[202px] bg-[#3d68b4] pt-px [clip-path:polygon(0_100%,12px_0,190px_0,100%_100%)]">
          <div class="flex h-full items-center bg-[#a3c6f6] pr-3 pl-[18px] [clip-path:polygon(1px_100%,12px_0,190px_0,201px_100%)]"><svg class="h-[14px] w-4 shrink-0"><use href="#page"/></svg><span class="ml-[3px] flex-1 overflow-hidden [mask-image:linear-gradient(to_right,black_85%,transparent)]">compss.bsc.es/rele</span><button aria-label="Close tab" class="mr-1 ml-2"><svg class="size-2"><use href="#x"/></svg></button></div>
        </div>
        <div class="-mb-px -ml-[9px] flex h-[25px] w-[202px] items-center bg-white pr-3 pl-[18px] text-black [clip-path:polygon(0_100%,12px_0,190px_0,100%_100%)]"><svg class="h-[14px] w-4 shrink-0"><use href="#page"/></svg><span class="ml-[3px] flex-1">PMES Dashboard</span><button aria-label="Close tab" class="mr-1 ml-2"><svg class="size-2"><use href="#x"/></svg></button></div>
        <button aria-label="New tab" class="mb-1 h-[15px] w-[28px] skew-x-[20deg] rounded-sm border border-[#5d86cc] bg-[#a3c6f6]"></button>
      </div>

      <!-- Address bar and bookmarks -->
      <div class="shrink-0 border-b border-[#a6a6a6] bg-linear-to-b from-[#f8f8f8] to-[#dddddd] to-60%">
        <div class="flex h-[35px] items-center px-[9px]">
          <div class="flex items-center gap-[14px] text-[#5a5a5a]">
            <button aria-label="Back"><svg class="h-[14px] w-4"><use href="#nav-back"/></svg></button>
            <button aria-label="Forward" class="text-[#c2c2c2]"><svg class="h-[14px] w-4"><use href="#nav-fwd"/></svg></button>
            <button aria-label="Reload"><svg class="size-4"><use href="#reload"/></svg></button>
            <button aria-label="Home"><svg class="size-4"><use href="#home"/></svg></button>
          </div>
          <div class="ml-2 flex h-7 flex-1 items-center rounded-sm border border-[#b0b0b0] bg-white px-[6px] text-[#666]">
            <svg class="size-4"><use href="#lock-bad"/></svg>
            <div class="ml-[3px] flex-1 text-[16px]"><span class="relative text-[#b01010]">https<svg class="absolute top-0 left-0 h-4 w-full" viewBox="0 0 40 16" preserveAspectRatio="none"><path d="M0 14 40 3" stroke="#a00808" stroke-width="2.500"/></svg></span>://<span class="text-black">bscgrid20.bsc.es</span>/pmes-testing/index.zul</div>
            <svg class="size-[18px]"><use href="#sync"/></svg>
            <button aria-label="Bookmark" class="-mr-1 ml-1"><svg class="size-[18px]"><use href="#star"/></svg></button>
          </div>
          <button aria-label="Adblock" class="ml-[9px]"><svg class="size-5"><use href="#adblock"/></svg></button>
          <button aria-label="Menu" class="ml-[15px] flex w-[14px] flex-col gap-[2px]"><i class="h-[3px] rounded-sm bg-[#555]"></i><i class="h-[3px] rounded-sm bg-[#555]"></i><i class="h-[3px] rounded-sm bg-[#555]"></i></button>
        </div>
        <nav class="flex h-6 items-start gap-[11px] pt-[2px] pl-[8px]">
          <a href="#apps-page" class="flex items-center gap-[6px]"><svg class="size-[13px]"><use href="#apps"/></svg>Apps</a>
          <a href="#bsc-links" class="flex items-center gap-[6px]"><svg class="h-[14px] w-4"><use href="#folder"/></svg>BSC</a>
          <a href="#compss" class="flex items-center gap-[6px]"><svg class="h-[14px] w-4"><use href="#folder"/></svg>COMPSs</a>
          <a href="#transplant" class="flex items-center gap-[6px]"><svg class="h-[14px] w-4"><use href="#folder"/></svg>TransPLANT</a>
          <a href="#master" class="flex items-center gap-[6px]"><svg class="h-[14px] w-4"><use href="#folder"/></svg>Master</a>
          <a href="#others" class="flex items-center gap-[6px]"><svg class="h-[14px] w-4"><use href="#folder"/></svg>Others</a>
        </nav>
      </div>

      <!-- Web page -->
      <main class="flex min-h-0 flex-1 flex-col px-[9px] font-['Liberation_Sans',sans-serif] text-[12px] leading-[14px] font-normal text-[#555]">
        <div class="grid h-[129px] shrink-0 grid-cols-[3fr_7fr] text-[#00206b]">
          <div class="flex items-start justify-center gap-2 pr-2">
            <div class="grid h-[76px] w-20 place-items-center">
              <svg class="col-start-1 row-start-1 h-[76px] w-20"><use href="#bsc-logo"/></svg>
              <span class="relative col-start-1 row-start-1 pl-5 text-[18px] leading-5 font-bold text-white italic">BSC</span>
            </div>
            <div class="pt-2 text-[15px] leading-[17px] font-bold italic">Barcelona<br>Supercomputing<br>Center<p class="text-[11px] leading-[14px] font-normal">Centro Nacional de Supercomputación</p></div>
          </div>
          <h2 class="pt-[13px] text-center text-[43px] leading-[48px]">PMES Dashboard</h2>
        </div>

        <nav class="flex h-[33px] shrink-0 items-center border-y border-[#d0d0d0] bg-linear-to-b from-white to-[#ebebeb] pb-px pl-[1px]">
          <button class="flex h-6 items-center gap-1 px-2">Management<svg class="h-[6px] w-[10px]"><use href="#caret"/></svg></button>
          <button class="flex h-6 items-center gap-1 px-2">New Job<svg class="h-[6px] w-[10px]"><use href="#caret"/></svg></button>
          <button class="flex h-6 items-center gap-1 px-2">Tools<svg class="h-[6px] w-[10px]"><use href="#caret"/></svg></button>
          <div class="relative ml-[2px]">
            <button class="flex h-6 items-center gap-1 rounded border border-[#999] px-[6px] shadow-[inset_0_1px_2px_#bbb]">System<svg class="h-[6px] w-[10px]"><use href="#caret"/></svg></button>
            <ul class="absolute top-[28px] left-0 z-10 flex h-[54px] w-[121px] flex-col justify-center border border-[#c8c8c8] bg-[linear-gradient(to_right,#fafafa_31px,#dddddd_31px,#dddddd_32px,#fafafa_32px)] px-[3px] pb-px shadow-[1px_1px_2px_#bbb]">
              <li class="flex h-6 items-center pl-9">Management</li>
              <li class="flex h-6 items-center rounded border border-[#7fb4d8] bg-linear-to-b from-[#f0f9fe] to-[#cfeafa] pl-[35px]">About</li>
            </ul>
          </div>
          <i class="ml-[5px] h-6 w-px bg-[#888]"></i>
          <button class="flex h-6 items-center gap-1 px-2">admin<svg class="h-[6px] w-[10px]"><use href="#caret"/></svg></button>
        </nav>

        <section class="mt-1 flex h-[365px] shrink-0 flex-col border border-t-0 border-[#cfcfcf]">
          <h3 class="-mx-px flex h-10 items-center rounded-t border border-b-0 border-[#8f8f8f] bg-[#e0ecf5] pl-[5px] text-[#333]">Jobs</h3>
          <table class="w-full table-fixed border-collapse">
            <colgroup><col class="w-[14.2%]"><col class="w-[14.2%]"><col class="w-[14.2%]"><col class="w-[14.2%]"><col class="w-[14.2%]"><col class="w-[4.7%]"><col class="w-[14.3%]"><col class="w-[10%]"></colgroup>
            <thead>
              <tr class="h-[34px] border-t-2 border-b border-[#cfcfcf] bg-linear-to-b from-white to-[#ececec] text-[#636363]">
                <th class="relative border-r border-[#cfcfcf] p-0">Submitted<svg class="absolute top-1 left-1/2 h-1 w-[6px]" viewBox="0 0 6 4"><path d="M0 0h6L3 4z" fill="#555"/></svg></th>
                <th class="border-r border-[#cfcfcf] p-0">Job ID</th><th class="border-r border-[#cfcfcf] p-0">User</th><th class="border-r border-[#cfcfcf] p-0">Type</th><th class="border-r border-[#cfcfcf] p-0">App Name</th><th class="border-r border-[#cfcfcf] p-0 whitespace-nowrap">Duration (s)</th><th class="border-r border-[#cfcfcf] p-0">Status</th>
                <th class="p-0"><div class="flex gap-1 px-[5px]">
                  <button aria-label="Refresh" class="grid h-6 flex-1 place-items-center rounded border border-[#a8a8a8] bg-linear-to-b from-white to-[#eeeeee]"><svg class="h-4 w-[14px]"><use href="#refresh"/></svg></button>
                  <button aria-label="Delete" class="grid h-6 flex-1 place-items-center rounded border border-[#a8a8a8] bg-linear-to-b from-white to-[#eeeeee]"><svg class="h-[15px] w-3"><use href="#bin"/></svg></button>
                </div></th>
              </tr>
            </thead>
            <tbody><tr><td colspan="8" class="p-0 text-center text-[#a8a8a8] italic">There are no jobs.</td></tr></tbody>
          </table>
        </section>

        <div class="mt-[5px] flex h-[33px] shrink-0 items-stretch">
          <button class="w-[66px] rounded-t border border-b-0 border-[#cfcfcf] font-bold">Details</button>
          <button class="w-[52px] rounded-t border border-l-0 border-[#cfcfcf] bg-linear-to-b from-white to-[#ececec]">Logs</button>
          <i class="flex-1 border-b border-[#cfcfcf]"></i>
        </div>
        <div class="mb-1 min-h-0 flex-1 overflow-hidden border border-t-0 border-[#cfcfcf] px-[6px] pt-[5px]">
          <div class="h-full overflow-hidden border border-b-0 border-[#cfcfcf] text-black">
            <table class="w-full border-collapse">
              <tr class="h-8"><th class="w-[131px] border-r border-white p-0 pr-[6px] text-right font-normal">Name:</th><td></td></tr>
              <tr class="h-8 bg-[#f7f7f7]"><th class="border-r border-white p-0 pr-[6px] text-right font-normal">Description:</th><td></td></tr>
              <tr class="h-8"><th class="border-r border-white p-0 pr-[6px] text-right font-normal">Executable:</th><td></td></tr>
              <tr class="h-8 bg-[#f7f7f7]"><th class="border-r border-white p-0 pr-[6px] text-right font-normal">Wall Clock Limit (min):</th><td></td></tr>
              <tr class="h-8"><th class="border-r border-white p-0 pr-[6px] text-right font-normal">Started:</th><td></td></tr>
              <tr class="h-8 bg-[#f7f7f7]"><th class="border-r border-white p-0 pr-[6px] text-right font-normal">Finished:</th><td></td></tr>
              <tr class="h-8"><th class="border-r border-white p-0 pr-[6px] text-right font-normal">Cores:</th><td></td></tr>
              <tr class="h-8 bg-[#f7f7f7]"><th class="border-r border-white p-0 pr-[6px] text-right font-normal">Memory (GB):</th><td></td></tr>
              <tr class="h-8"><th class="border-r border-white p-0 pr-[6px] text-right font-normal">Disk Size (GB):</th><td></td></tr>
              <tr class="h-8 bg-[#f7f7f7]"><th class="border-r border-white p-0 pr-[6px] text-right font-normal">Image:</th><td></td></tr>
            </table>
          </div>
        </div>
      </main>
      <div class="absolute bottom-0 left-0 flex h-6 w-1/3 items-center rounded-tr bg-[#dedede] pl-[3px] text-[#444]">javascript:;</div>
    </section>
  </div>
</div>
</body>
</html>
